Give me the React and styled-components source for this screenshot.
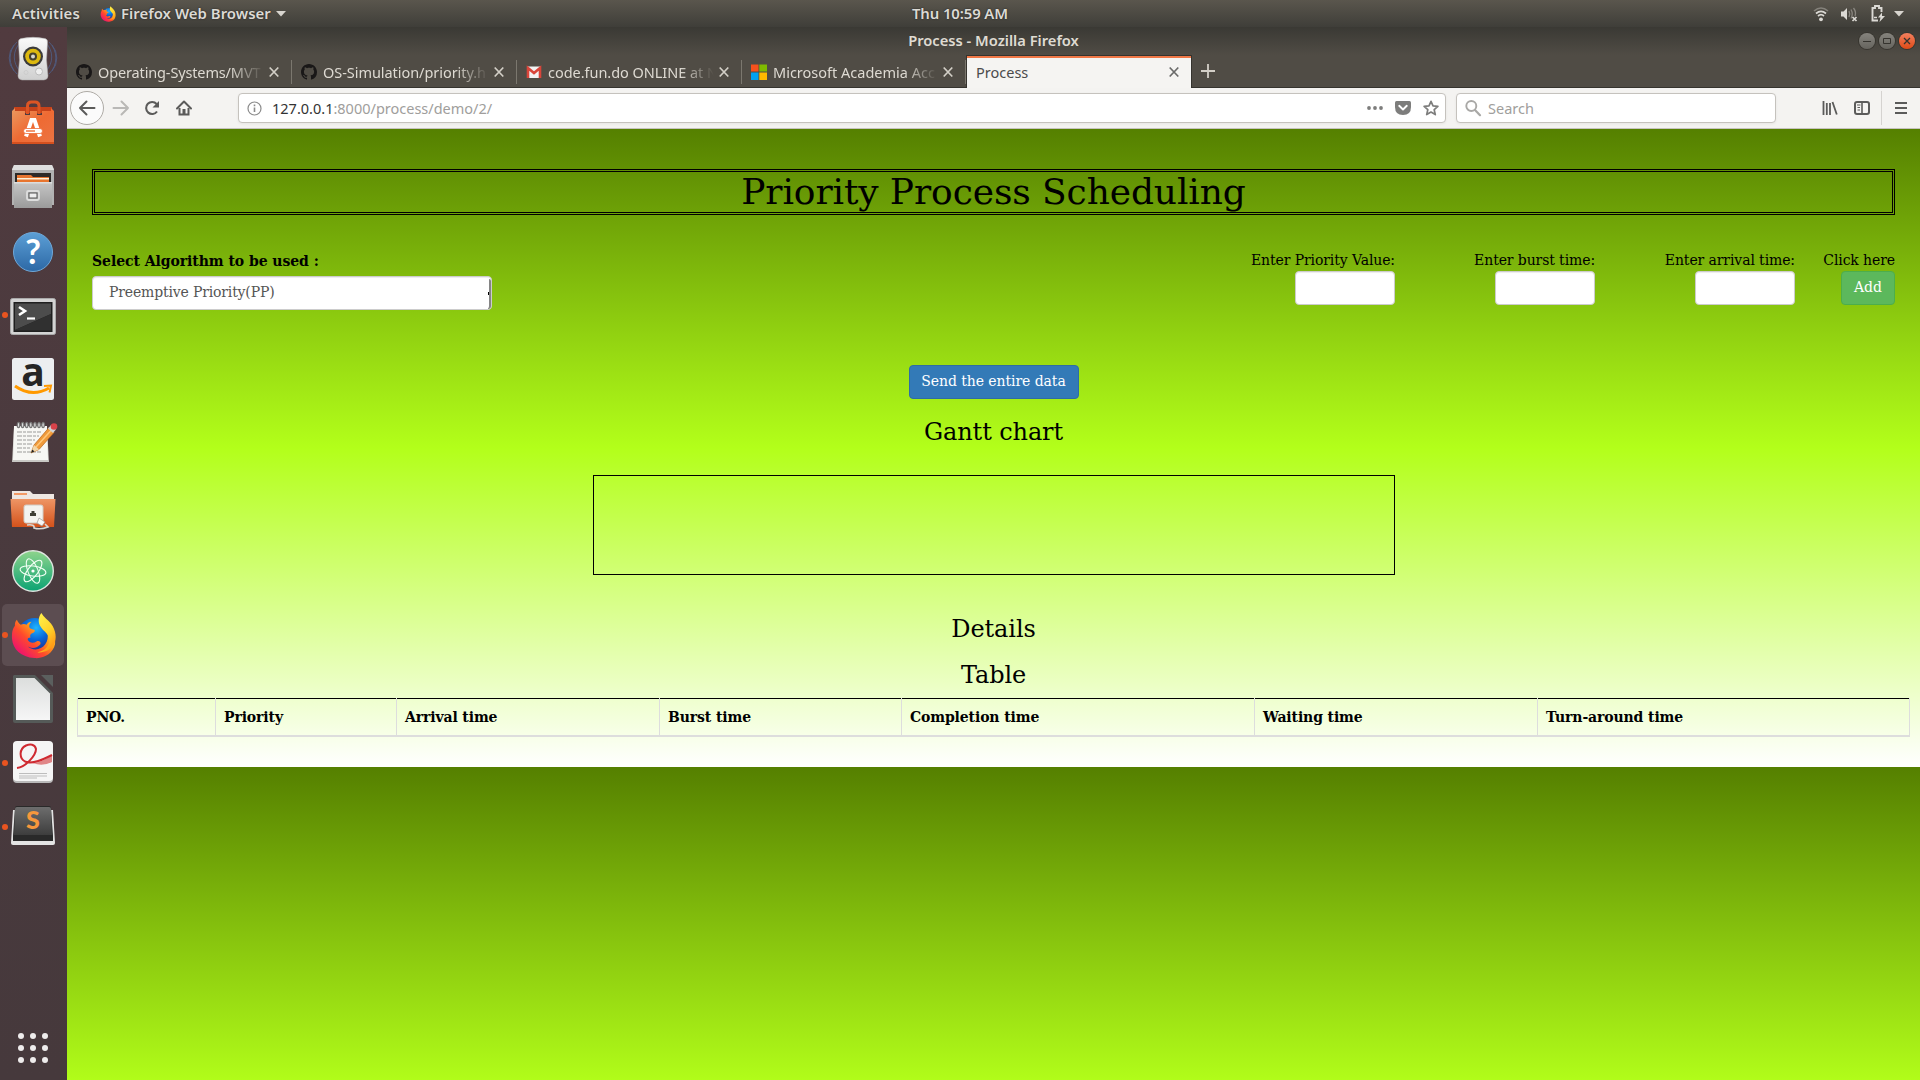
import React from "react";
import styled, { createGlobalStyle } from "styled-components";

const GlobalStyle = createGlobalStyle`
  *, *::before, *::after { box-sizing: border-box; }
  html, body { margin: 0; padding: 0; width: 1920px; height: 1080px; overflow: hidden; }
  svg { display: block; flex: none; overflow: visible; }
`;

const uiFont = `"Noto Sans", "Open Sans", sans-serif`;
const pageFont = `"DejaVu Serif", serif`;

const Desktop = styled.div`
  width: 1920px;
  height: 1080px;
  display: flex;
  flex-direction: column;
  font-family: ${uiFont};
  overflow: hidden;
`;

/* ---------- system bar ---------- */

const SystemBar = styled.header`
  height: 27px;
  flex: none;
  display: grid;
  grid-template-columns: 1fr auto 1fr;
  align-items: center;
  background: linear-gradient(#5a564d, #3f3e39);
  color: #dcdad5;
  font-size: 14.9px;
  font-weight: 600;
  text-shadow: 0 0 2px rgba(0, 0, 0, 0.6);
`;

const BarGroup = styled.div`
  display: flex;
  align-items: center;
  padding-left: 12px;
`;

const BarText = styled.span`
  white-space: nowrap;
  line-height: 20px;
  padding-bottom: 1px;
  letter-spacing: ${(p) => p.$spacing || 0}px;
`;

const AppMenu = styled.div`
  display: flex;
  align-items: center;
  margin-left: 20px;
  gap: 5px;
`;

const StatusGroup = styled.div`
  display: flex;
  align-items: center;
  justify-content: flex-end;
  padding-right: 14px;
`;

const StatusItem = styled.span`
  display: flex;
  justify-content: center;
  width: ${(p) => p.$w}px;
`;

const Below = styled.div`
  flex: 1;
  display: flex;
  min-height: 0;
`;

/* ---------- dock ---------- */

const Dock = styled.nav`
  width: 67px;
  flex: none;
  display: flex;
  flex-direction: column;
  background: linear-gradient(#513b3f, #4a3a3e 45%, #46393c);
`;

const DockSlot = styled.div`
  height: 64px;
  flex: none;
  display: flex;
  align-items: center;
`;

const RunningDot = styled.span`
  width: 6px;
  height: 6px;
  margin-left: 2px;
  margin-right: -6px;
  border-radius: 50%;
  background: ${(p) => (p.$on ? "#e95420" : "transparent")};
  z-index: 1;
`;

const DockTile = styled.div`
  width: 62px;
  height: 62px;
  border-radius: 5px;
  display: flex;
  align-items: center;
  justify-content: center;
  background: ${(p) => (p.$active ? "#5c4d51" : "transparent")};
`;

const AppGrid = styled.div`
  margin: auto 0 17px 18px;
  display: grid;
  grid-template-columns: repeat(3, 6px);
  gap: 6px;
`;

const GridDot = styled.span`
  width: 6px;
  height: 6px;
  border-radius: 50%;
  background: #eeecec;
`;

/* ---------- browser window ---------- */

const BrowserWindow = styled.section`
  flex: 1;
  min-width: 0;
  display: flex;
  flex-direction: column;
`;

const TitleBar = styled.div`
  height: 28px;
  flex: none;
  display: grid;
  grid-template-columns: 1fr auto 1fr;
  align-items: center;
  background: linear-gradient(#3a3934, #504c45);
  color: #dfdbd2;
  font-size: 14.7px;
  font-weight: 600;
`;

const WindowButtons = styled.div`
  grid-column: 3;
  display: flex;
  gap: 4px;
  justify-content: flex-end;
  padding-right: 5px;
`;

const WindowTitle = styled.span`
  grid-column: 2;
  line-height: 20px;
  padding-bottom: 3px;
`;

const WindowButton = styled.span`
  width: 16px;
  height: 16px;
  border-radius: 50%;
  background: ${(p) => (p.$close ? "linear-gradient(#f4805f, #df4a16)" : "linear-gradient(#85837d, #66645e)")};
  box-shadow: 0 0 0 1px #37352f;
  display: flex;
  align-items: center;
  justify-content: center;
`;

const TabStrip = styled.div`
  height: 33px;
  flex: none;
  display: flex;
  background: #504c45;
  border-bottom: 1px solid #35332e;
`;

const Tab = styled.div`
  width: ${(p) => p.$w}px;
  flex: none;
  height: 32px;
  display: flex;
  align-items: center;
  padding: 2px 13px 0 9px;
  color: #dedad2;
  font-size: 14.5px;
  background: linear-gradient(#7b776e, #7b776e) right 5px / 1px 24px no-repeat;
`;

const ActiveTab = styled(Tab)`
  height: 33px;
  background: #f5f4f2;
  border: solid #35332e;
  border-width: 1px 1px 0;
  box-shadow: inset 0 2px #f07746;
  color: #4b4b4b;
  padding: 0 12px 0 9px;
`;

const TabTitle = styled.span`
  flex: 1;
  min-width: 0;
  margin-left: ${(p) => p.$left}px;
  margin-right: 5px;
  padding-bottom: 1px;
  overflow: hidden;
  white-space: nowrap;
  line-height: 20px;
  letter-spacing: ${(p) => p.$spacing || 0}px;
  mask-image: ${(p) => (p.$fade ? "linear-gradient(to left, transparent, #000 34px)" : "none")};
`;

const NewTab = styled.div`
  display: flex;
  align-items: center;
  padding-left: 9px;
`;

const Toolbar = styled.div`
  height: 41px;
  flex: none;
  display: flex;
  align-items: center;
  background: #f4f3f1;
  border-bottom: 1px solid #c6c3be;
  padding-left: 3px;
`;

const BackButton = styled.span`
  width: 34px;
  height: 34px;
  border-radius: 50%;
  border: 1px solid #aeaba6;
  background: #fbfbfb;
  display: flex;
  align-items: center;
  justify-content: center;
`;

const ToolIcon = styled.span`
  width: ${(p) => p.$w || 32}px;
  display: flex;
  align-items: center;
  justify-content: center;
`;

const Field = styled.div`
  width: ${(p) => p.$w}px;
  height: 30px;
  flex: none;
  margin-left: ${(p) => p.$left}px;
  display: flex;
  align-items: center;
  background: #fff;
  border: 1px solid #c5c2bd;
  border-radius: 4px;
  box-shadow: 0 1px 3px rgba(0, 0, 0, 0.06);
  font-size: 14.5px;
  color: #a09e9c;
  padding: 0 0 0 8px;
`;

const FieldText = styled.span`
  flex: 1;
  margin-left: ${(p) => p.$left}px;
  line-height: 20px;
  white-space: nowrap;
`;

const Host = styled.span`
  color: #333;
`;

const Separator = styled.span`
  width: 1px;
  height: 34px;
  background: #d5d3d0;
  margin: 0 3px;
`;

const EndTools = styled.div`
  display: flex;
  align-items: center;
  margin-left: auto;
  padding-right: 3px;
`;

/* ---------- web page ---------- */

const Page = styled.main`
  flex: 1;
  min-height: 0;
  font-family: ${pageFont};
  font-size: 14px;
  line-height: 20px;
  letter-spacing: -0.1px;
  color: #000;
  background: linear-gradient(#558000, #b3ff1a 50%, #ffffff) 0 0 / 100% 638px repeat-y;
  display: flex;
  flex-direction: column;
`;

const Heading = styled.h1`
  margin: 40px 25px 0;
  height: 46px;
  flex: none;
  border: 1px solid #000;
  outline: 1px solid #000;
  outline-offset: -3px;
  padding-top: 2px;
  font-size: 36px;
  font-weight: 400;
  line-height: 39.6px;
  text-align: center;
`;

const FormRow = styled.form`
  margin: 35px 25px 0;
  height: 115px;
  display: flex;
  align-items: flex-start;
`;

const Algorithm = styled.div`
  width: 400px;
  margin: 1px auto 0 0;
`;

const AlgorithmLabel = styled.label`
  display: block;
  font-weight: 700;
  letter-spacing: -0.06px;
  margin-bottom: 5px;
`;

const SelectBox = styled.div`
  height: 34px;
  display: flex;
  align-items: center;
  padding-left: 16px;
  background: #fff;
  border: 1px solid #ccc;
  border-radius: 4px;
  color: #555;
  box-shadow: inset 0 1px 1px rgba(0, 0, 0, 0.075);
`;

const SelectValue = styled.span`
  flex: 1;
  padding-bottom: 3px;
  letter-spacing: -0.16px;
`;

const SelectTick = styled.span`
  width: 1px;
  height: 3px;
  background: #000;
`;

const SelectEdge = styled.span`
  width: 3px;
  height: 30px;
  border-right: 2px solid #858585;
  border-bottom: 1px solid #858585;
  border-radius: 0 2px 3px 0;
  margin-left: -1px;
  margin-top: 2px;
`;

const Entry = styled.div`
  width: ${(p) => p.$w}px;
  display: flex;
  flex-direction: column;
  align-items: flex-end;
  white-space: nowrap;
  gap: 1px;
`;

const EntryInput = styled.input`
  width: 100px;
  height: 34px;
  padding: 6px 12px;
  border: 1px solid #ccc;
  border-radius: 4px;
  background: #fff;
  box-shadow: inset 0 1px 1px rgba(0, 0, 0, 0.075);
`;

const Button = styled.button`
  height: 34px;
  width: ${(p) => p.$w}px;
  padding: 0 0 3px;
  border-radius: 4px;
  border: 1px solid ${(p) => (p.$primary ? "#2e6da4" : "#4cae4c")};
  background: ${(p) => (p.$primary ? "#337ab7" : "#5cb85c")};
  color: #fff;
  font: 14px/20px ${pageFont};
  letter-spacing: -0.07px;
  white-space: nowrap;
`;

const Centered = styled.div`
  display: flex;
  flex-direction: column;
  align-items: center;
`;

const SubHeading = styled.h3`
  margin: ${(p) => p.$top}px 0 0;
  font-size: 24px;
  font-weight: 400;
  line-height: 26px;
`;

const GanttBox = styled.div`
  width: 802px;
  height: 100px;
  margin-top: 30px;
  border: 1px solid #000;
`;

const DataTable = styled.div`
  margin: 10px 10px 0 10px;
  height: 39px;
  display: grid;
  grid-template-columns: 138px 181px 263px 242px 353px 283px 1fr;
  border-bottom: 2px solid #ddd;
  border-right: 1px solid #ddd;
`;

const HeadCell = styled.div`
  border-left: 1px solid #ddd;
  background: linear-gradient(#000, #000) 0 0 / 100% 1px no-repeat;
  background-origin: padding-box;
  background-clip: padding-box;
  padding: 9px 8px 0;
  font-weight: 700;
  letter-spacing: -0.12px;
  white-space: nowrap;
`;

/* ---------- icons ---------- */

const FirefoxLogo = ({ size }) => (
  <svg width={size} height={size} viewBox="-1 0 48 48">
    <defs>
      <radialGradient id="fxBlue" cx="0.55" cy="0.3" r="0.8">
        <stop offset="0" stopColor="#1fb6ff" />
        <stop offset="0.45" stopColor="#0a66d8" />
        <stop offset="1" stopColor="#2a1f7c" />
      </radialGradient>
      <linearGradient id="fxBody" x1="0.9" y1="0.1" x2="0.15" y2="0.8">
        <stop offset="0" stopColor="#fff044" />
        <stop offset="0.35" stopColor="#ffa318" />
        <stop offset="0.65" stopColor="#ff4b2b" />
        <stop offset="1" stopColor="#ee1868" />
      </linearGradient>
      <linearGradient id="fxTail" x1="0" y1="0" x2="0.5" y2="1">
        <stop offset="0" stopColor="#fff44f" />
        <stop offset="0.6" stopColor="#ffd32a" />
        <stop offset="1" stopColor="#ff9a16" />
      </linearGradient>
    </defs>
    <circle cx="24" cy="23" r="17" fill="url(#fxBlue)" />
    <path fill="url(#fxBody)" d="M6 8c1 2 2 4 4 5 2-1 4-1 6 0 1-2 3-3 5-3-2 2-3 4-2 6 1 1 3 2 5 2 1 1 0 3-3 4-1 1-2 2-1 4-2 0-3 1-3 2 2 4 6 4 9 2 3-1 5 1 4 3-3 4-9 5-13 2 5 5 14 4 18-2 5-7 2-16-2-21 9 4 13 14 12 21-2 9-11 15-21 14C10 46 2 38 1 27c0-5 0-9 3-13 0-2 0-4 2-6z" />
    <path fill="url(#fxTail)" d="M31 1c2 4 7 7 10 11 5 7 6 15 3 21-4 7-12 9-17 8 8-1 13-7 12-14-1-5-5-7-8-11-4-5-3-11 0-15z" />
  </svg>
);

const SpeakerApp = () => (
  <svg width="50" height="50" viewBox="0 0 50 50">
    <defs>
      <linearGradient id="spk" x1="0" y1="0" x2="0" y2="1">
        <stop offset="0" stopColor="#fbfbfb" />
        <stop offset="1" stopColor="#cfcfcf" />
      </linearGradient>
    </defs>
    <g fill="none" stroke="#4f6a9c" strokeWidth="1" opacity="0.65">
      <path d="M9 8a22 22 0 0 0 0 32M6 11a20 20 0 0 0 0 26M12 9a20 20 0 0 0 0 28" />
      <path d="M41 8a22 22 0 0 1 0 32M44 11a20 20 0 0 1 0 26M38 9a20 20 0 0 1 0 28" />
    </g>
    <path d="M13 4.500Q25 2 37 4.500Q40 5 39.500 9L38.500 26L40 42Q40 45.500 36 46H14Q10 45.500 10 42L11.500 26L10.500 9Q10 5 13 4.500Z" fill="url(#spk)" stroke="#aaa" strokeWidth="0.500" />
    <circle cx="25" cy="22.500" r="10" fill="#3b3b3b" />
    <circle cx="25" cy="22.500" r="7.800" fill="#ddb90f" />
    <circle cx="25" cy="22.500" r="4" fill="#44402e" />
    <circle cx="25" cy="22.500" r="2" fill="#d8d8d0" />
    <circle cx="31" cy="37.500" r="3.500" fill="#eee" stroke="#bbb" />
    <circle cx="18" cy="38.500" r="2" fill="none" stroke="#ccc" />
  </svg>
);

const SoftwareApp = () => (
  <svg width="50" height="50" viewBox="0 0 50 50">
    <defs>
      <linearGradient id="bag" x1="0" y1="0" x2="1" y2="1">
        <stop offset="0" stopColor="#eb9a60" />
        <stop offset="0.500" stopColor="#ee6a33" />
        <stop offset="1" stopColor="#ec7443" />
      </linearGradient>
    </defs>
    <path d="M6 9h38v6H6z" fill="#c5421a" />
    <path d="M4 13l3-3v3h10v4h5v-4h7v4h5v-4h9v-3l3 3v33H4z" fill="url(#bag)" />
    <path d="M19.500 16V8q0-4 4-4h3.500q4 0 4 4v8" fill="none" stroke="#dc5524" strokeWidth="3" />
    <path d="M4 44h42v2H4z" fill="#d5501f" />
    <path d="M18 38.500L23.500 22h3L32 38.500" fill="none" stroke="#fff" strokeWidth="4" />
    <rect x="15.500" y="30.500" width="19" height="5" rx="2.500" fill="#fff" stroke="#ed6b35" strokeWidth="0.800" />
    <rect x="18" y="32.300" width="9" height="1.400" fill="#ed6b35" />
  </svg>
);

const FilesApp = () => (
  <svg width="50" height="50" viewBox="0 0 50 50">
    <defs>
      <linearGradient id="cab" x1="0" y1="0" x2="0" y2="1">
        <stop offset="0" stopColor="#c6c6c6" />
        <stop offset="1" stopColor="#9b9b9b" />
      </linearGradient>
    </defs>
    <path d="M6 3h38l2 4v36H4V7z" fill="#b2b2b2" />
    <path d="M6 3h38l2 5H4z" fill="#dedede" />
    <rect x="7" y="11" width="36" height="11" fill="#2e2a28" />
    <path d="M9 13h14l2 2h16v6H9z" fill="#e8752f" />
    <path d="M9 16h32v1.500H9z" fill="#fff2d8" />
    <rect x="6" y="20" width="38" height="26" fill="url(#cab)" />
    <path d="M6 20h38v1.500H6z" fill="#ddd" />
    <rect x="19" y="29" width="12" height="9" rx="1.500" fill="#b6b6b6" stroke="#dedede" strokeWidth="1.800" />
    <rect x="21" y="31" width="8" height="5" fill="#eee" stroke="#555" strokeWidth="1" />
  </svg>
);

const HelpApp = () => (
  <svg width="50" height="50" viewBox="0 0 50 50">
    <defs>
      <linearGradient id="help" x1="0" y1="0" x2="0" y2="1">
        <stop offset="0" stopColor="#5c9fd6" />
        <stop offset="1" stopColor="#2c68a5" />
      </linearGradient>
    </defs>
    <circle cx="25" cy="26" r="19.500" fill="url(#help)" stroke="#6fa8d8" strokeWidth="1" />
    <text x="25" y="38" textAnchor="middle" fontFamily="Lato, sans-serif" fontWeight="700" fontSize="34" fill="#fff">?</text>
  </svg>
);

const TerminalApp = () => (
  <svg width="50" height="50" viewBox="0 0 50 50">
    <rect x="2.500" y="8.500" width="45" height="36" rx="2" fill="#d3d3d3" stroke="#aaa" />
    <rect x="5.500" y="12" width="39" height="30" fill="#1f1f1f" />
    <path d="M7 13.500h36V24L7 40z" fill="#4c4c4c" />
    <path d="M7 40L43 24v16.500H7z" fill="#303030" />
    <path d="M11 17l6 4-6 4" fill="none" stroke="#fff" strokeWidth="2.600" />
    <path d="M19 28.500h8" stroke="#fff" strokeWidth="2.200" />
  </svg>
);

const AmazonApp = () => (
  <svg width="50" height="50" viewBox="0 0 50 50">
    <rect x="4" y="4" width="42" height="42" rx="2.500" fill="#eceef0" />
    <text x="25" y="32" textAnchor="middle" fontFamily='"Open Sans", sans-serif' fontWeight="700" fontSize="39" fill="#252525">a</text>
    <path d="M7 32q17 12 34 2" fill="none" stroke="#f90" strokeWidth="3" />
    <path d="M36 32l7-.500-1.500 7" fill="none" stroke="#f90" strokeWidth="2" />
  </svg>
);

const NotesApp = () => (
  <svg width="50" height="50" viewBox="0 0 50 50">
    <path d="M6 10h33l2 34H4z" fill="#c8c8c4" />
    <path d="M6 8h33l1 34H5z" fill="#f7f7f4" />
    <g fill="none" stroke="#767676" strokeWidth="1.200">
      {[0, 1, 2, 3, 4, 5, 6].map((i) => (
        <ellipse key={i} cx={10.5 + i * 4.1} cy="7" rx="1.300" ry="2.600" fill="#ddd" />
      ))}
    </g>
    <path d="M9 14h24M9 18h22M9 22h18M9 26h16M9 30h13M9 34h24" stroke="#9b9b99" strokeWidth="1" strokeDasharray="5 1 3 1" />
    <path d="M23 35l3-8L41 9.500l5 5-15 17z" fill="#f09a3a" stroke="#b8661b" strokeWidth="0.700" />
    <path d="M28 29L43 12.500" stroke="#ffc77a" strokeWidth="1.500" />
    <path d="M23 35l3-8 5 4.500z" fill="#f1d6a8" />
    <path d="M23 35l1.400-3.500 2 2z" fill="#222" />
    <path d="M40 10.500l3-3.500 5 4.500-3 3.500z" fill="#cfd3d6" />
    <circle cx="46" cy="8.500" r="3.300" fill="#d8434a" />
  </svg>
);

const NetworkFolderApp = () => (
  <svg width="50" height="50" viewBox="0 0 50 50">
    <defs>
      <linearGradient id="fold" x1="0" y1="0" x2="0" y2="1">
        <stop offset="0" stopColor="#ee9565" />
        <stop offset="1" stopColor="#d4521b" />
      </linearGradient>
    </defs>
    <path d="M4 9h18l3 3h21v10H4z" fill="#eee7e2" />
    <path d="M6 11h13v2H6z" fill="#f29a66" />
    <path d="M2.500 17h45L46 45H4z" fill="url(#fold)" />
    <rect x="16" y="23" width="19" height="18" rx="2" fill="#f3f3f0" stroke="#d0cbc4" />
    <path d="M22 34v-3h1.500v-2h3v2H28v3z" fill="#3e3f36" />
    <path d="M19 43q8-1 7 3q6 2 14-1l-3-3" fill="none" stroke="#d8d8d4" strokeWidth="1.600" />
    <path d="M31 36l6 4-3 4-5-3z" fill="#f7f7f5" stroke="#999" strokeWidth="0.700" />
  </svg>
);

const AtomApp = () => (
  <svg width="50" height="50" viewBox="0 0 50 50">
    <defs>
      <linearGradient id="atom" x1="0" y1="0" x2="0" y2="1">
        <stop offset="0" stopColor="#8fd48c" />
        <stop offset="1" stopColor="#0ba373" />
      </linearGradient>
    </defs>
    <circle cx="25" cy="25" r="20.300" fill="url(#atom)" stroke="#dfe5e0" strokeWidth="1.400" />
    <g fill="none" stroke="#f3fff5" strokeWidth="1.100">
      <ellipse cx="25" cy="25" rx="13" ry="5" transform="rotate(8 25 25)" />
      <ellipse cx="25" cy="25" rx="13" ry="5" transform="rotate(68 25 25)" />
      <ellipse cx="25" cy="25" rx="13" ry="5" transform="rotate(128 25 25)" />
    </g>
    <circle cx="25" cy="25" r="1.600" fill="#fff" />
  </svg>
);

const DocumentApp = () => (
  <svg width="50" height="50" viewBox="0 0 50 50">
    <defs>
      <linearGradient id="docFill" x1="0" y1="0" x2="0" y2="1">
        <stop offset="0" stopColor="#dcdedd" />
        <stop offset="1" stopColor="#f6f6f6" />
      </linearGradient>
    </defs>
    <path d="M6 1h21l18 18v28q0 2-2 2H7q-2 0-2-2V2z" fill="#555a58" />
    <path d="M33 1h12v12z" fill="#5b5f5e" />
    <path d="M8 4h18.500L42 19.500V46H8z" fill="url(#docFill)" />
  </svg>
);

const PdfApp = () => (
  <svg width="50" height="50" viewBox="0 0 50 50">
    <rect x="5" y="4" width="40" height="41" rx="4" fill="#b9b9b9" />
    <rect x="5" y="3" width="40" height="40" rx="4" fill="#f5f5f5" />
    <path d="M25 25q10-1 19-8v7q-10 5-19 1z" fill="#e08587" />
    <path d="M9 30C18 29 28 17 28 11C27 6 22 6 18 7.500C11 11 11 20 17 23.500C24 27 36 21 44 17" fill="none" stroke="#cf2a31" strokeWidth="2" />
    <path d="M11 35.500h28M11 38h28M11 40h18" stroke="#bdbdbd" strokeWidth="1" />
  </svg>
);

const SublimeApp = () => (
  <svg width="50" height="50" viewBox="0 0 50 50">
    <defs>
      <linearGradient id="subl" x1="0" y1="0" x2="0" y2="1">
        <stop offset="0" stopColor="#6d6d6d" />
        <stop offset="1" stopColor="#3d3d3d" />
      </linearGradient>
    </defs>
    <path d="M5 8h40l2 33q0 2-2 2H5q-2 0-2-2z" fill="#e4e4e4" />
    <path d="M9 4h32q2 0 2 2l2 28v5H5v-5L7 6q0-2 2-2z" fill="#292929" />
    <path d="M9 5h32q2 0 2 2l1 26H6L7 7q0-2 2-2z" fill="url(#subl)" />
    <text x="25" y="27" textAnchor="middle" fontFamily="Lato, sans-serif" fontWeight="900" fontSize="25" fill="#f7973c">S</text>
  </svg>
);

const GithubIcon = () => (
  <svg width="16" height="16" viewBox="0 0 16 16">
    <path fill="#191717" d="M8 0C3.580 0 0 3.580 0 8c0 3.540 2.290 6.530 5.470 7.590.4.070.55-.17.55-.38 0-.19-.01-.82-.01-1.490-2.010.37-2.530-.49-2.690-.94-.09-.23-.48-.94-.82-1.130-.28-.15-.68-.52-.01-.53.63-.01 1.080.58 1.230.82.72 1.210 1.870.87 2.330.66.07-.52.28-.87.51-1.070-1.780-.2-3.640-.89-3.640-3.950 0-.87.31-1.590.82-2.150-.08-.2-.36-1.020.08-2.120 0 0 .67-.21 2.200.82.64-.18 1.320-.27 2-.27.68 0 1.360.09 2 .27 1.530-1.040 2.200-.82 2.200-.82.44 1.100.16 1.920.08 2.120.51.56.82 1.270.82 2.150 0 3.070-1.870 3.750-3.650 3.950.29.25.54.73.54 1.480 0 1.070-.01 1.930-.01 2.200 0 .21.15.46.55.38A8.013 8.013 0 0016 8c0-4.420-3.580-8-8-8z" />
  </svg>
);

const GmailIcon = () => (
  <svg width="16" height="16" viewBox="0 0 16 16">
    <path d="M1 2.500h14v11.500H1z" fill="#f2f2f2" />
    <path d="M2 14V4l6 5 6-5v10" fill="none" stroke="#d9453a" strokeWidth="2.600" />
  </svg>
);

const MicrosoftIcon = () => (
  <svg width="16" height="16" viewBox="0 0 16 16">
    <path d="M0 .5h7.500v7H0z" fill="#f6511d" />
    <path d="M8.300.5H16v7H8.300z" fill="#7fba00" />
    <path d="M0 8.500h7.500V16H0z" fill="#00a1f1" />
    <path d="M8.300 8.500H16V16H8.300z" fill="#ffb900" />
  </svg>
);

const CloseIcon = ({ color }) => (
  <svg width="10" height="10" viewBox="0 0 10 10">
    <path d="M.7.500L9.300 9.500M9.300.500L.7 9.500" stroke={color} strokeWidth="1.700" />
  </svg>
);

const Triangle = () => (
  <svg width="10" height="6" viewBox="0 0 10 6">
    <path d="M0 0h10L5 5.500z" fill="#d8d5cf" />
  </svg>
);

const WifiIcon = () => (
  <svg width="16" height="16" viewBox="0 0 16 16" fill="none">
    <path d="M1 5q7-6 14 0" stroke="#85827b" strokeWidth="1.600" />
    <path d="M3 7.500q5-4.300 10 0M5 10q3-2.600 6 0" stroke="#dcdad5" strokeWidth="1.700" />
    <circle cx="8" cy="13.300" r="1.900" fill="#dcdad5" />
  </svg>
);

const VolumeIcon = () => (
  <svg width="18" height="16" viewBox="0 0 18 16" fill="none">
    <path d="M1 5.500h2.500L7 2v12L3.500 10.500H1z" fill="#dcdad5" />
    <path d="M9 5q1.500 3 0 6M11 3.500q2.500 4.500 0 9M13.500 2q3 4 1.500 8" stroke="#8a8780" strokeWidth="1.300" />
    <path d="M12.500 11l4 4M16.500 11l-4 4" stroke="#dcdad5" strokeWidth="1.700" />
  </svg>
);

const BatteryIcon = () => (
  <svg width="16" height="17" viewBox="0 0 16 17" fill="none">
    <path d="M8 15.500H2.500V3H5V1h4v2h2.500v4" stroke="#dcdad5" strokeWidth="1.900" />
    <path d="M12 7.500l-4 5h2.500L9.500 17l5.500-6h-3z" fill="#dcdad5" />
    <path d="M4 12.500h3" stroke="#dcdad5" strokeWidth="1.500" />
  </svg>
);

const toolColor = "#5b5b5a";

const BackIcon = ({ color = toolColor, flip }) => (
  <svg width="17" height="16" viewBox="0 0 17 16" fill="none" transform={flip ? "scale(-1 1)" : undefined}>
    <path d="M1 8H15.500M7.500 1.500L1 8 7.500 14.500" stroke={color} strokeWidth="2" strokeLinecap="round" strokeLinejoin="round" />
  </svg>
);

const ReloadIcon = () => (
  <svg width="16" height="16" viewBox="0 0 16 16" fill="none">
    <path d="M13 11.500A6 6 0 1 1 12.600 4" stroke={toolColor} strokeWidth="2.100" />
    <path d="M15 1v6.500H8.500z" fill={toolColor} />
  </svg>
);

const HomeIcon = () => (
  <svg width="16" height="16" viewBox="0 0 16 16" fill="none">
    <path d="M1 8.500L8 1.500l7 7" stroke={toolColor} strokeWidth="2" strokeLinecap="round" strokeLinejoin="round" />
    <path d="M3.500 8v6.500h9V8" stroke={toolColor} strokeWidth="2" />
    <path d="M6.500 9h3v6h-3z" fill={toolColor} />
  </svg>
);

const InfoIcon = () => (
  <svg width="15" height="15" viewBox="0 0 15 15" fill="none">
    <circle cx="7.500" cy="7.500" r="6.500" stroke="#8b8b8b" strokeWidth="1.200" />
    <path d="M7.500 6.500V11M7.500 3.500v1.700" stroke="#8b8b8b" strokeWidth="1.600" />
  </svg>
);

const DotsIcon = () => (
  <svg width="16" height="16" viewBox="0 0 16 16" fill="#7d7d7c">
    <circle cx="2" cy="8" r="1.900" />
    <circle cx="8" cy="8" r="1.900" />
    <circle cx="14" cy="8" r="1.900" />
  </svg>
);

const PocketIcon = () => (
  <svg width="16" height="16" viewBox="0 0 16 16" fill="none">
    <path d="M1.500 1h13q1.500 0 1.500 1.500V7q0 8-8 8T0 7V2.500Q0 1 1.500 1z" fill="#7d7d7c" />
    <path d="M4.200 5.800L8 9.500l3.800-3.700" stroke="#fff" strokeWidth="1.900" strokeLinecap="round" strokeLinejoin="round" />
  </svg>
);

const StarIcon = () => (
  <svg width="16" height="16" viewBox="0 0 16 16" fill="none">
    <path d="M8 1.400l2 4.500 4.900.5-3.700 3.300 1.100 4.900L8 12.100l-4.300 2.500 1.100-4.900L1.100 6.400 6 5.900z" stroke="#7d7d7c" strokeWidth="1.700" strokeLinejoin="round" />
  </svg>
);

const SearchIcon = () => (
  <svg width="16" height="16" viewBox="0 0 16 16" fill="none">
    <circle cx="6.300" cy="6" r="5" stroke="#a9a8a6" strokeWidth="1.900" />
    <path d="M10 10l5 5.200" stroke="#a9a8a6" strokeWidth="2.200" strokeLinecap="round" />
  </svg>
);

const LibraryIcon = () => (
  <svg width="16" height="14" viewBox="0 0 16 14" fill="none" stroke={toolColor} strokeWidth="1.800">
    <path d="M1.500 0v14M4.800 2v12M8 2v12M10.500 1l4.300 12.500" />
  </svg>
);

const SidebarIcon = () => (
  <svg width="16" height="14" viewBox="0 0 16 14" fill="none" stroke={toolColor}>
    <rect x="1" y="1" width="14" height="12" rx="2" strokeWidth="2" />
    <path d="M8 1v12" strokeWidth="1.600" />
    <path d="M3 4h3.500M3.500 6.500H6M3.500 9H6" strokeWidth="1.200" />
  </svg>
);

const MenuIcon = () => (
  <svg width="12" height="12" viewBox="0 0 12 12" stroke={toolColor} strokeWidth="2">
    <path d="M0 1h12M0 6h12M0 11h12" />
  </svg>
);

const PlusIcon = () => (
  <svg width="14" height="14" viewBox="0 0 14 14" stroke="#d3cfc7" strokeWidth="1.800">
    <path d="M7 0v14M0 7h14" />
  </svg>
);

const dockApps = [
  { id: "music", Icon: SpeakerApp },
  { id: "software", Icon: SoftwareApp },
  { id: "files", Icon: FilesApp },
  { id: "help", Icon: HelpApp },
  { id: "terminal", Icon: TerminalApp, running: true },
  { id: "amazon", Icon: AmazonApp },
  { id: "notes", Icon: NotesApp },
  { id: "network", Icon: NetworkFolderApp },
  { id: "atom", Icon: AtomApp },
  { id: "firefox", Icon: () => <FirefoxLogo size={47} />, running: true, active: true },
  { id: "document", Icon: DocumentApp },
  { id: "pdf", Icon: PdfApp, running: true },
  { id: "sublime", Icon: SublimeApp, running: true },
];

const tabs = [
  { title: "Operating-Systems/MVT", Icon: GithubIcon, spacing: -0.14 },
  { title: "OS-Simulation/priority.h", Icon: GithubIcon, spacing: -0.05 },
  { title: "code.fun.do ONLINE at N", Icon: GmailIcon, spacing: -0.04 },
  { title: "Microsoft Academia Acc", Icon: MicrosoftIcon, spacing: 0 },
];

const columns = ["PNO.", "Priority", "Arrival time", "Burst time", "Completion time", "Waiting time", "Turn-around time"];

export default function App() {
  return (
    <Desktop>
      <GlobalStyle />
      <SystemBar>
        <BarGroup>
          <BarText $spacing={0.15}>Activities</BarText>
          <AppMenu>
            <FirefoxLogo size={16} />
            <BarText $spacing={0.03}>Firefox Web Browser</BarText>
            <Triangle />
          </AppMenu>
        </BarGroup>
        <BarText $spacing={-0.1}>Thu 10:59 AM</BarText>
        <StatusGroup>
          <StatusItem $w={28}><WifiIcon /></StatusItem>
          <StatusItem $w={28}><VolumeIcon /></StatusItem>
          <StatusItem $w={29}><BatteryIcon /></StatusItem>
          <StatusItem $w={14}><Triangle /></StatusItem>
        </StatusGroup>
      </SystemBar>
      <Below>
        <Dock>
          {dockApps.map(({ id, Icon, running, active }) => (
            <DockSlot key={id}>
              <RunningDot $on={running} />
              <DockTile $active={active}><Icon /></DockTile>
            </DockSlot>
          ))}
          <AppGrid>
            {Array.from({ length: 9 }, (_, i) => <GridDot key={i} />)}
          </AppGrid>
        </Dock>
        <BrowserWindow>
          <TitleBar>
            <WindowTitle>Process - Mozilla Firefox</WindowTitle>
            <WindowButtons>
              <WindowButton>
                <svg width="8" height="8" viewBox="0 0 8 8"><path d="M0 4.500h8" stroke="#35332e" /></svg>
              </WindowButton>
              <WindowButton>
                <svg width="8" height="8" viewBox="0 0 8 8"><path d="M.5 1.500h7v5h-7z" fill="none" stroke="#35332e" /></svg>
              </WindowButton>
              <WindowButton $close>
                <svg width="8" height="8" viewBox="0 0 8 8"><path d="M1 1l6 6M7 1L1 7" stroke="#35332e" strokeWidth="1.300" /></svg>
              </WindowButton>
            </WindowButtons>
          </TitleBar>
          <TabStrip>
            {tabs.map(({ title, Icon, spacing }, i) => (
              <Tab key={title} $w={i === 3 ? 224 : 225}>
                <Icon />
                <TabTitle $left={6} $spacing={spacing} $fade>{title}</TabTitle>
                <CloseIcon color="#d3cfc7" />
              </Tab>
            ))}
            <ActiveTab $w={226}>
              <TabTitle $left={0}>Process</TabTitle>
              <CloseIcon color="#6b6b6a" />
            </ActiveTab>
            <NewTab><PlusIcon /></NewTab>
          </TabStrip>
          <Toolbar>
            <BackButton><BackIcon /></BackButton>
            <ToolIcon><BackIcon flip color="#b9b8b6" /></ToolIcon>
            <ToolIcon><ReloadIcon /></ToolIcon>
            <ToolIcon><HomeIcon /></ToolIcon>
            <Field $w={1208} $left={38}>
              <InfoIcon />
              <FieldText $left={10}><Host>127.0.0.1</Host>:8000/process/demo/2/</FieldText>
              <ToolIcon $w={28}><DotsIcon /></ToolIcon>
              <ToolIcon $w={28}><PocketIcon /></ToolIcon>
              <ToolIcon $w={28}><StarIcon /></ToolIcon>
            </Field>
            <Field $w={320} $left={10}>
              <SearchIcon />
              <FieldText $left={7}>Search</FieldText>
            </Field>
            <EndTools>
              <ToolIcon><LibraryIcon /></ToolIcon>
              <ToolIcon><SidebarIcon /></ToolIcon>
              <Separator />
              <ToolIcon><MenuIcon /></ToolIcon>
            </EndTools>
          </Toolbar>
          <Page>
            <Heading>Priority Process Scheduling</Heading>
            <FormRow>
              <Algorithm>
                <AlgorithmLabel>Select Algorithm to be used :</AlgorithmLabel>
                <SelectBox>
                  <SelectValue>Preemptive Priority(PP)</SelectValue>
                  <SelectTick />
                  <SelectEdge />
                </SelectBox>
              </Algorithm>
              <Entry $w={200}>Enter Priority Value:<EntryInput /></Entry>
              <Entry $w={200}>Enter burst time:<EntryInput /></Entry>
              <Entry $w={200}>Enter arrival time:<EntryInput /></Entry>
              <Entry $w={100}>Click here<Button type="button" $w={54}>Add</Button></Entry>
            </FormRow>
            <Centered>
              <Button type="button" $primary $w={170}>Send the entire data</Button>
              <SubHeading $top={20}>Gantt chart</SubHeading>
              <GanttBox />
              <SubHeading $top={41}>Details</SubHeading>
              <SubHeading $top={20}>Table</SubHeading>
            </Centered>
            <DataTable>
              {columns.map((name) => <HeadCell key={name}>{name}</HeadCell>)}
            </DataTable>
          </Page>
        </BrowserWindow>
      </Below>
    </Desktop>
  );
}
